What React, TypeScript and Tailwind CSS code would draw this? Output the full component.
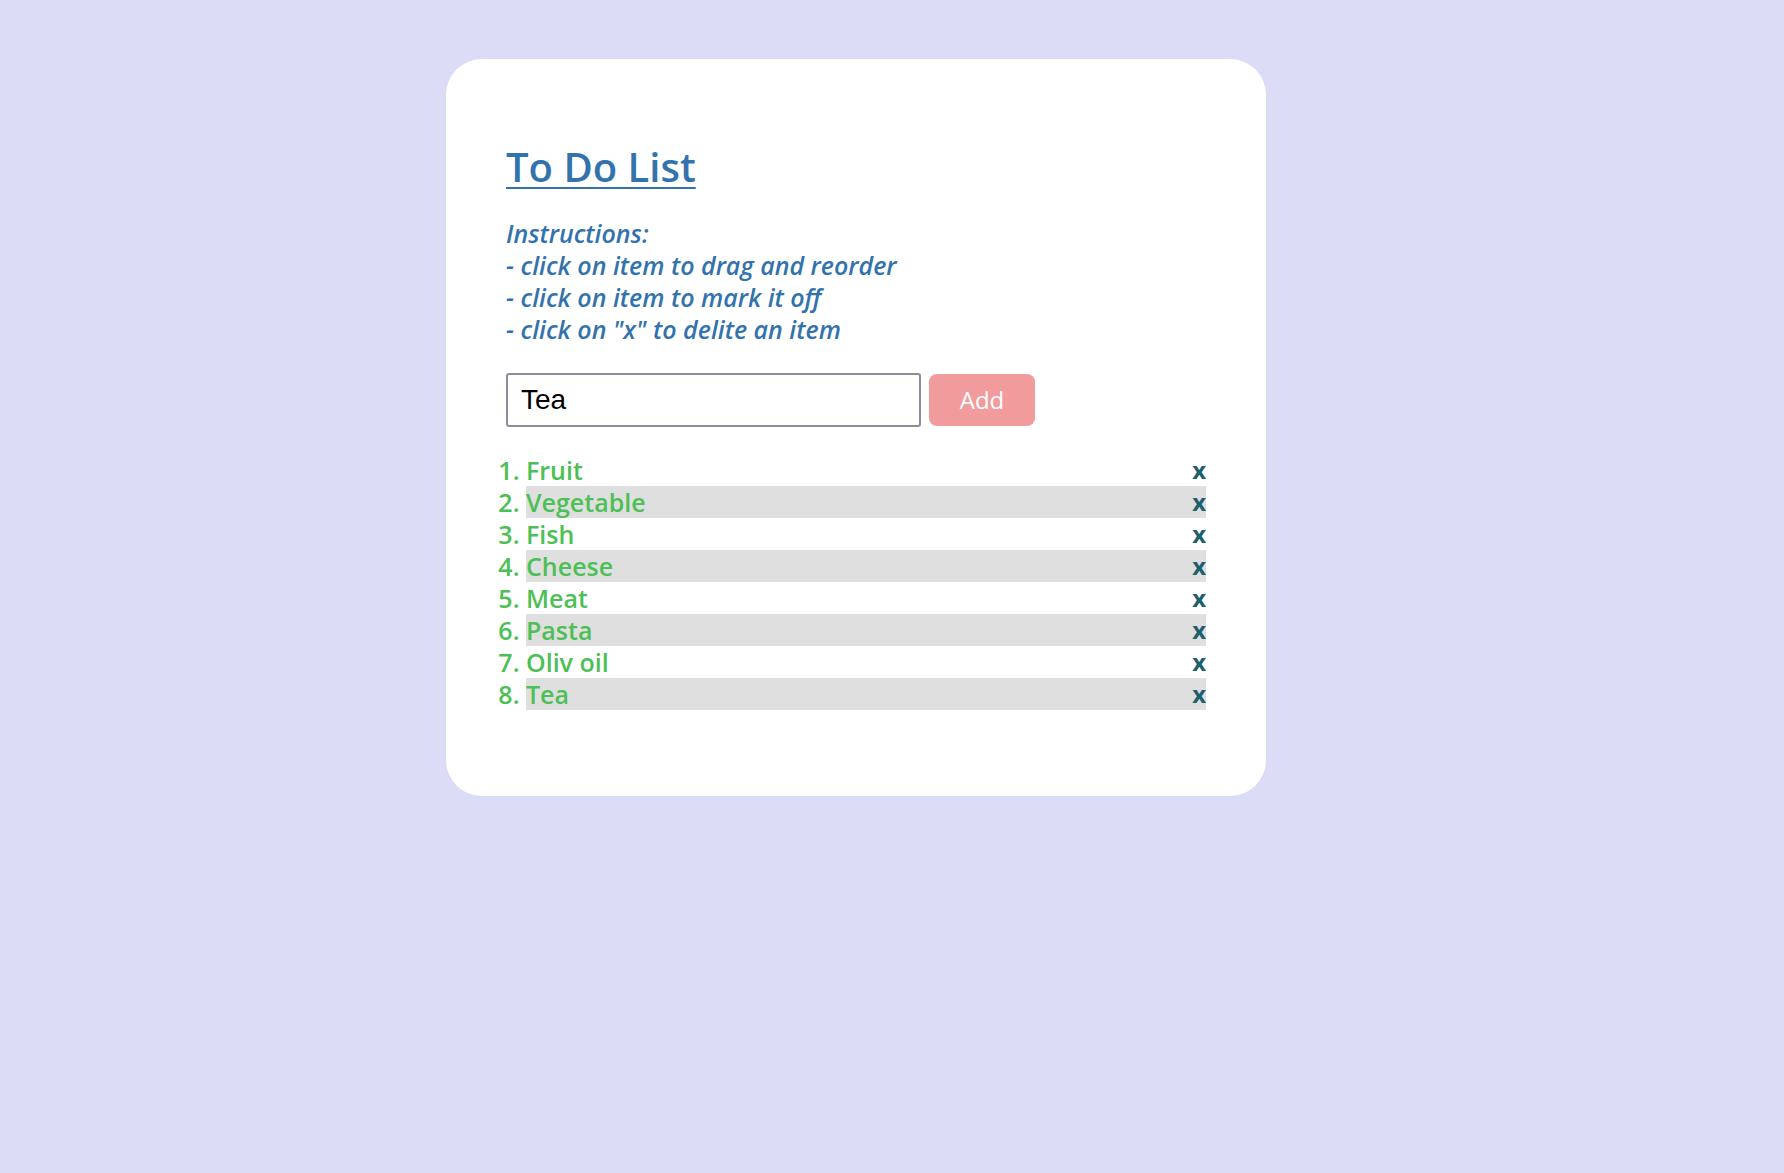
import React, { useState } from 'react';

export default function App() {
  const [items, setItems] = useState<string[]>([
    'Fruit',
    'Vegetable',
    'Fish',
    'Cheese',
    'Meat',
    'Pasta',
    'Oliv oil',
    'Tea',
  ]);
  const [text, setText] = useState('Tea');

  const handleAdd = () => {
    if (!text.trim()) return;
    setItems(prev => [...prev, text.trim()]);
  };

  const handleDelete = (idx: number) => {
    setItems(prev => prev.filter((_, i) => i !== idx));
  };

  return (
    <div className="min-h-screen bg-[#dcdcf7] pt-[59px] pb-10 font-['Open_Sans',sans-serif]">
      <div className="ml-[446px] w-[820px] rounded-[36px] bg-white px-[60px] pt-[84px] pb-[86px]">
        <h1 className="text-[40px] leading-[48px] font-semibold text-[#3373ad] underline decoration-2 underline-offset-[5px]">
          To Do List
        </h1>

        {/* Instrucciones */}
        <p className="mt-[26px] text-[25px] leading-[32px] italic font-[550] text-[#3373ad]">
          Instructions:
          <br />- click on item to drag and reorder
          <br />- click on item to mark it off
          <br />- click on "x" to delite an item
        </p>

        {/* Input + botón */}
        <div className="mt-[28px] flex items-center gap-[8px]">
          <input
            type="text"
            value={text}
            onChange={e => setText(e.target.value)}
            className="h-[54px] w-[415px] rounded-[3px] border-2 border-[#8e8c9e] bg-white px-[13px] text-[28px] text-black font-['Liberation_Sans',Arial,sans-serif] focus:outline-none"
          />
          <button
            type="button"
            onClick={handleAdd}
            className="h-[52px] w-[106px] rounded-[8px] bg-[#f29b9c] text-[24px] text-white"
          >
            Add
          </button>
        </div>

        {/* Lista */}
        <ol className="mt-[27px] list-decimal pl-[20px] text-[25px] leading-[32px] font-semibold text-[#4cbf55] marker:text-[#4cbf55]">
          {items.map((item, i) => (
            <li key={i} className={i % 2 === 1 ? 'bg-[#dfdfdf]' : ''}>
              <div className="flex h-[32px] items-center justify-between">
                <span>{item}</span>
                <span
                  onClick={() => handleDelete(i)}
                  className="cursor-pointer text-[24px] font-bold text-[#1e5e6e]"
                >
                  x
                </span>
              </div>
            </li>
          ))}
        </ol>
      </div>
    </div>
  );
}
